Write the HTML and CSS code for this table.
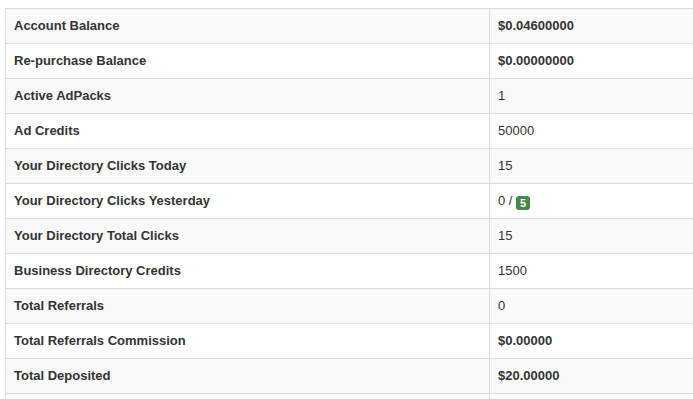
FILE: index.html
```html
<!DOCTYPE html>
<html>
<head>
<meta charset="utf-8">
<link rel="stylesheet" href="styles.css">
</head>
<body>
<table class="stats">
  <colgroup><col class="c-label"><col class="c-value"></colgroup>
  <tbody>
    <tr><td class="label">Account Balance</td><td class="strong">$0.04600000</td></tr>
    <tr><td class="label">Re-purchase Balance</td><td class="strong">$0.00000000</td></tr>
    <tr><td class="label">Active AdPacks</td><td>1</td></tr>
    <tr><td class="label">Ad Credits</td><td>50000</td></tr>
    <tr><td class="label">Your Directory Clicks Today</td><td>15</td></tr>
    <tr><td class="label">Your Directory Clicks Yesterday</td><td>0 / <span class="badge">5</span></td></tr>
    <tr><td class="label">Your Directory Total Clicks</td><td>15</td></tr>
    <tr><td class="label">Business Directory Credits</td><td>1500</td></tr>
    <tr><td class="label">Total Referrals</td><td>0</td></tr>
    <tr><td class="label">Total Referrals Commission</td><td class="strong">$0.00000</td></tr>
    <tr><td class="label">Total Deposited</td><td class="strong">$20.00000</td></tr>
    <tr class="spacer"><td></td><td></td></tr>
  </tbody>
</table>
</body>
</html>
```
FILE: styles.css
```css
html, body {
  margin: 0;
  padding: 0;
  background: #fff;
  overflow: hidden;
}
body {
  padding: 8px 0 0 5px;
  font-family: "Liberation Sans", Arial, sans-serif;
  font-size: 13px;
  color: #333;
}
.stats {
  border-collapse: collapse;
  table-layout: fixed;
  width: 740px;
}
.c-label { width: 484px; }
.c-value { width: 256px; }
.stats td {
  border: 1px solid #ddd;
  padding: 8px;
  line-height: 18px;
  height: 18px;
  vertical-align: middle;
  white-space: nowrap;
}
.stats tr:nth-child(odd) td {
  background: #f9f9f9;
}
.label, .strong {
  font-weight: bold;
}
.badge {
  display: inline-block;
  min-width: 14px;
  height: 14px;
  line-height: 14px;
  padding: 0 1px;
  box-sizing: border-box;
  border-radius: 3px;
  background: #468847;
  color: #fff;
  font-weight: bold;
  font-size: 11px;
  text-align: center;
  vertical-align: -2px;
}
```
